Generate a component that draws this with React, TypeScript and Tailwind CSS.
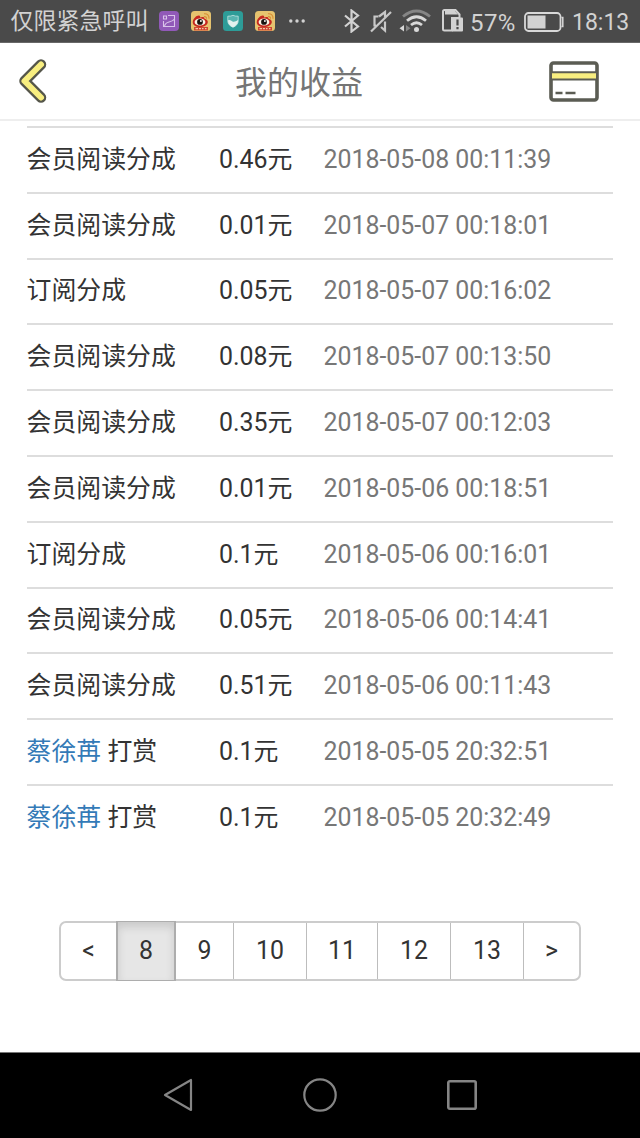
import React from "react";

type Entry = { user?: string; label: string; amount: string; time: string };

const entries: Entry[] = [
  { label: "会员阅读分成", amount: "0.46元", time: "2018-05-08 00:11:39" },
  { label: "会员阅读分成", amount: "0.01元", time: "2018-05-07 00:18:01" },
  { label: "订阅分成", amount: "0.05元", time: "2018-05-07 00:16:02" },
  { label: "会员阅读分成", amount: "0.08元", time: "2018-05-07 00:13:50" },
  { label: "会员阅读分成", amount: "0.35元", time: "2018-05-07 00:12:03" },
  { label: "会员阅读分成", amount: "0.01元", time: "2018-05-06 00:18:51" },
  { label: "订阅分成", amount: "0.1元", time: "2018-05-06 00:16:01" },
  { label: "会员阅读分成", amount: "0.05元", time: "2018-05-06 00:14:41" },
  { label: "会员阅读分成", amount: "0.51元", time: "2018-05-06 00:11:43" },
  { user: "蔡徐苒", label: "打赏", amount: "0.1元", time: "2018-05-05 20:32:51" },
  { user: "蔡徐苒", label: "打赏", amount: "0.1元", time: "2018-05-05 20:32:49" },
];

const pages = [
  { text: "<", style: "w-[55px]" },
  {
    text: "8",
    style:
      "w-[60px] -my-[2px] border-x-2 border-y border-[#adadad] bg-[#e6e6e6] shadow-[inset_0_5px_8px_rgba(0,0,0,0.125)]",
  },
  { text: "9", style: "w-[58px] border-r border-[#bdbdbd]" },
  { text: "10", style: "w-[73px] border-r border-[#bdbdbd]" },
  { text: "11", style: "w-[71px] border-r border-[#bdbdbd]" },
  { text: "12", style: "w-[73px] border-r border-[#bdbdbd]" },
  { text: "13", style: "w-[73px] border-r border-[#bdbdbd]" },
  { text: ">", style: "w-[55px]" },
];

function GalleryIcon() {
  return (
    <svg className="size-5 shrink-0" viewBox="0 0 20 20" fill="none" stroke="#d9c3ea">
      <rect width="20" height="20" rx="4" fill="#9159b8" stroke="none" />
      <path d="M9 4.500h6.500v11h-11V10M4.500 5h3v3h-3zM5.500 15.500c.5-3 2-4 4.500-4.500s4-1 5.500-3" strokeWidth="1.100" />
    </svg>
  );
}

function WeiboIcon() {
  return (
    <svg className="size-5 shrink-0" viewBox="0 0 20 20">
      <rect width="20" height="20" rx="3.5" fill="#e6c36f" />
      <path d="M1.8 10.500C2.500 7.500 5.500 4.300 8 4.600c1.200.2 1.300 1.200 1 2 2-.9 4.800-.8 4.500 1.200 2 .5 3.500 1.400 3.300 3.500-.3 3-4 4.800-7.800 4.800-4.300 0-7.800-2.100-7.200-5.600z" fill="#c5281f" />
      <ellipse cx="9" cy="11" rx="5.400" ry="3.600" fill="#fbf4e4" />
      <circle cx="9" cy="10.900" r="2.900" fill="#191310" />
      <circle cx="9.900" cy="10" r="0.900" fill="#fff" />
      <path d="M13 5.500c1.500-.3 2.700.8 2.500 2.300M13 2.800c3.200-.4 5.400 1.800 5 5" fill="none" stroke="#d88c32" strokeWidth="1.100" />
      <path d="M3 16h14v3.500H3z" fill="#cf4532" />
      <path d="M4.500 17.700h2.500M8 17.700h2M11 17.700h1.500M14 17.700h1.500" stroke="#f3c7a5" strokeWidth="1.200" />
    </svg>
  );
}

function ShieldIcon() {
  return (
    <svg className="size-5 shrink-0" viewBox="0 0 20 20">
      <rect width="20" height="20" rx="3.5" fill="#2d9c98" />
      <path d="M4.800 5.200Q8 5.400 10 4.300q2 1.100 5.200.9V10c0 3-2.200 5-5.200 6.300C7 15 4.800 13 4.800 10z" fill="#58b5b1" stroke="#c4e5e2" strokeWidth="0.800" />
      <path d="M5 9.500c2-1 3 .2 4.500 1s3.500 0 5.500-1.400V10c0 3-2.200 5-5 6.200C7 15 5 13 5 10z" fill="#e2f1ee" />
    </svg>
  );
}

function StatusBar() {
  return (
    <div className="flex h-[43px] shrink-0 items-center border-b border-[#686868] bg-[#4a4a4a] text-[23px] leading-[42px] text-[#d2d2d2]">
      <span className="ml-[10.5px] w-[148.5px] pt-[2px] whitespace-nowrap">仅限紧急呼叫</span>
      <div className="flex gap-3">
        <GalleryIcon />
        <WeiboIcon />
        <ShieldIcon />
        <WeiboIcon />
      </div>
      <svg className="ml-[14px] h-1 w-4" viewBox="0 0 16 4" fill="#d2d2d2">
        <circle cx="1.800" cy="2" r="1.700" />
        <circle cx="8" cy="2" r="1.700" />
        <circle cx="14.200" cy="2" r="1.700" />
      </svg>
      <svg className="ml-[38px] h-6 w-[18px] shrink-0" viewBox="0 0 18 24" fill="none" stroke="#d2d2d2" strokeWidth="2.200">
        <path d="M2 6.500l13 11-6.500 5V1.500l6.500 5-13 11" />
      </svg>
      <svg className="ml-[9px] h-6 w-[22px] shrink-0" viewBox="0 0 22 24" fill="none" stroke="#c8c8c8" strokeWidth="2.200">
        <path d="M8.500 7.500H4.500v9H6M9 7.500L15 3v5M11 18l4 3.500V12.500M1 22.500L21 3" />
      </svg>
      <svg className="ml-[7px] h-6 w-8 shrink-0" viewBox="0 0 32 24" fill="none" stroke="#d8d8d8" strokeWidth="2.800">
        <path d="M4 7.500q13.500-11 27 0" stroke="#858585" />
        <path d="M8 11.800q9.500-8 19 0" />
        <path d="M12 16q5.500-4.500 11 0" />
        <circle cx="17.500" cy="20.500" r="2.500" fill="#d8d8d8" stroke="none" />
        <path d="M5 16v6.500l-4.500-3.200z" fill="#d8d8d8" stroke="none" />
        <path d="M7 16v6.500l4.500-3.200z" fill="#858585" stroke="none" />
      </svg>
      <svg className="ml-[11px] h-6 w-[22px] shrink-0" viewBox="0 0 22 24">
        <path d="M2.500 1h11l4 4.500V9H10v12.500H2.500a1.500 1.500 0 0 1-1.500-1.500V2.500A1.500 1.500 0 0 1 2.500 1z" fill="#4a4a4a" stroke="#d2d2d2" strokeWidth="2" />
        <path d="M3 2h10l3 3.500H3z" fill="#d2d2d2" />
        <rect x="10" y="8.500" width="11" height="14" rx="1" fill="#d2d2d2" />
        <path d="M15.500 10.500v6M15.500 18v2.200" stroke="#4a4a4a" strokeWidth="2.200" />
      </svg>
      <span className="ml-[6px] w-[54px] pt-[3px] text-[24px] tracking-[0.4px] whitespace-nowrap">57%</span>
      <svg className="mt-[2px] h-5 w-10 shrink-0" viewBox="0 0 40 20">
        <rect x="1" y="1" width="35.500" height="18" rx="3.500" fill="none" stroke="#d8d8d8" strokeWidth="1.800" />
        <rect x="3.500" y="3.500" width="18" height="13" fill="#d2d2d2" />
        <path d="M37.500 5.500h1.300v9h-1.300" fill="none" stroke="#d8d8d8" strokeWidth="1.500" />
      </svg>
      <span className="ml-[8px] pt-[3px] whitespace-nowrap">18:13</span>
    </div>
  );
}

function Header() {
  return (
    <header className="flex h-[78px] shrink-0 items-center border-b-2 border-[#eeeeee] pl-[18px]">
      <svg className="h-[46px] w-[62px]" viewBox="0 0 62 46" fill="none" strokeLinecap="round" strokeLinejoin="round">
        <path d="M23 6.500L6.500 23 23 39.500" stroke="#55564a" strokeWidth="10.500" />
        <path d="M23 6.500L6.500 23 23 39.500" stroke="#f8ee80" strokeWidth="6" />
      </svg>
      <h1 className="ml-[155px] w-[128px] pt-[4px] text-[32px] leading-[48px] text-[#757575]">我的收益</h1>
      <svg className="ml-[185px] h-[42px] w-[52px]" viewBox="0 0 52 42">
        <rect x="3" y="3" width="46" height="37" rx="2.500" fill="#fff" stroke="#5b5c53" strokeWidth="3.600" />
        <rect x="4" y="12.500" width="44" height="7" fill="#f8ee80" />
        <path d="M3 12.200h46M3 19.500h46" stroke="#5b5c53" strokeWidth="2" />
        <path d="M7.500 33h7M17.500 33h10" stroke="#5b5c53" strokeWidth="2.600" />
      </svg>
    </header>
  );
}

export default function App() {
  return (
    <div className="flex h-[1138px] w-[640px] flex-col overflow-hidden bg-white font-['Roboto','Noto_Sans_CJK_SC',sans-serif]">
      <StatusBar />
      <Header />
      <main className="flex flex-1 flex-col">
        <ul className="mr-[27px] ml-[26.5px] mt-[5px]">
          {entries.map((entry) => (
            <li
              key={entry.time}
              className="flex h-[65.8px] items-center border-t-2 border-[#dddddd] text-[24.9px] leading-[36px] whitespace-nowrap text-[#333333]"
            >
              <span className="w-[192.5px]">
                {entry.user && <a className="text-[#337ab7]">{entry.user}</a>}
                {entry.user && " "}
                {entry.label}
              </span>
              <span className="w-[104.5px]">{entry.amount}</span>
              <time className="text-[#777777]">{entry.time}</time>
            </li>
          ))}
        </ul>
        <nav className="mx-[59px] mt-[71px] flex h-[60px] w-[522px] rounded-[7px] border-2 border-[#cccccc] text-[24.9px] text-[#333333]">
          {pages.map((page) => (
            <button key={page.text} className={`shrink-0 ${page.style}`}>
              {page.text}
            </button>
          ))}
        </nav>
      </main>
      <footer className="flex h-[86px] shrink-0 items-center justify-center gap-[108px] border-t border-[#777777] bg-black pb-[2px]">
        <svg className="size-[34px]" viewBox="0 0 34 34" fill="none" stroke="#858585" strokeWidth="2.200" strokeLinejoin="round">
          <path d="M30 2v30L4 17z" />
        </svg>
        <svg className="size-[34px]" viewBox="0 0 34 34" fill="none" stroke="#858585" strokeWidth="2.200">
          <circle cx="17" cy="17" r="15.700" />
        </svg>
        <svg className="size-[34px]" viewBox="0 0 34 34" fill="none" stroke="#858585" strokeWidth="2.600">
          <rect x="3.300" y="3.300" width="27.400" height="27.400" rx="1.500" />
        </svg>
      </footer>
    </div>
  );
}
